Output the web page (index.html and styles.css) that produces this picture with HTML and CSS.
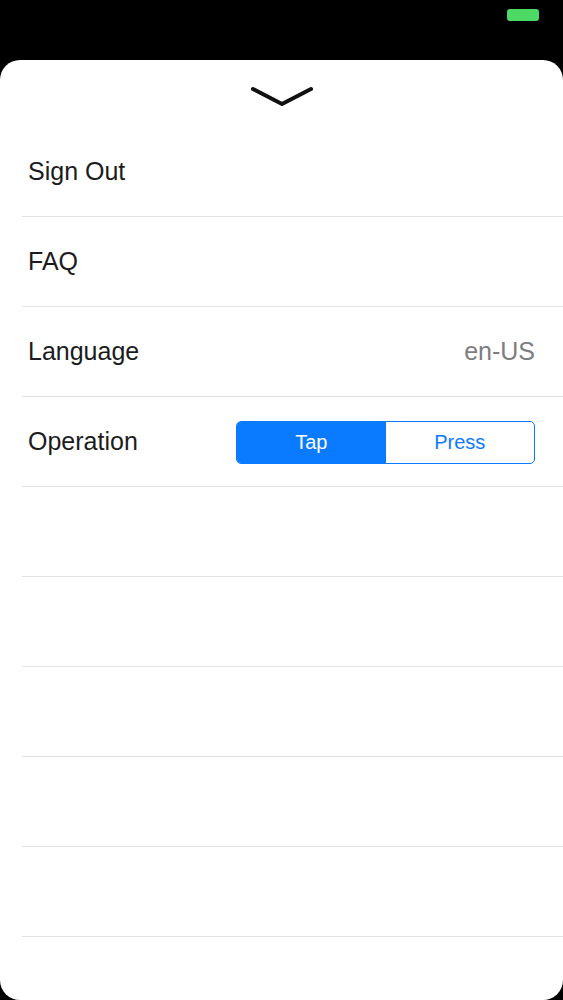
FILE: index.html
```html
<!DOCTYPE html>
<html lang="en">
<head>
    <meta charset="UTF-8">
    <meta name="viewport" content="width=device-width, initial-scale=1.0">
    <title>Settings</title>
    <link rel="stylesheet" href="styles.css">
</head>
<body>
    <div id="statusBar">
        <div class="battery"></div>
    </div>

    <div id="sheet">
        <div class="handle">
            <svg width="64" height="22" viewBox="0 0 64 22">
                <path d="M3 3 L32 18 L61 3" fill="none" stroke="#111" stroke-width="4" stroke-linecap="round" stroke-linejoin="round"/>
            </svg>
        </div>

        <div id="settingsList">
            <div class="row"><span class="label">Sign Out</span></div>
            <div class="row"><span class="label">FAQ</span></div>
            <div class="row">
                <span class="label">Language</span>
                <span class="value">en-US</span>
            </div>
            <div class="row">
                <span class="label">Operation</span>
                <div class="segmented">
                    <div class="segment active">Tap</div>
                    <div class="segment">Press</div>
                </div>
            </div>
            <div class="row"></div>
            <div class="row"></div>
            <div class="row"></div>
            <div class="row"></div>
            <div class="row"></div>
        </div>
    </div>
</body>
</html>
```

FILE: styles.css
```css
body {
    font-family: 'Helvetica Neue', 'Liberation Sans', Arial, sans-serif;
    background: #000;
    margin: 0;
    color: #1c1c1e;
}

#statusBar {
    height: 60px;
    display: flex;
    justify-content: flex-end;
    padding: 9px 24px 0 0;
    box-sizing: border-box;
}

.battery {
    width: 32px;
    height: 12px;
    background: #4cd964;
    border-radius: 3px;
}

#sheet {
    background: #fff;
    height: 940px;
    border-radius: 20px;
    overflow: hidden;
}

.handle {
    height: 67px;
    display: flex;
    justify-content: center;
    padding-top: 26px;
    box-sizing: border-box;
}

#settingsList {
    margin-left: 22px;
}

.row {
    height: 90px;
    box-sizing: border-box;
    border-bottom: 1px solid #e2e2e4;
    display: flex;
    align-items: center;
    justify-content: space-between;
    padding: 0 28px 0 6px;
}

.label {
    font-size: 25px;
}

.value {
    font-size: 25px;
    color: #7d7d82;
}

.segmented {
    display: flex;
    width: 299px;
    height: 43px;
    margin-top: 2px;
    border: 1px solid #0a7aff;
    border-radius: 5px;
    overflow: hidden;
    box-sizing: border-box;
}

.segment {
    flex: 1;
    display: flex;
    align-items: center;
    justify-content: center;
    font-size: 20px;
    color: #0a7aff;
}

.segment.active {
    background: #0a7aff;
    color: #fff;
}
```
